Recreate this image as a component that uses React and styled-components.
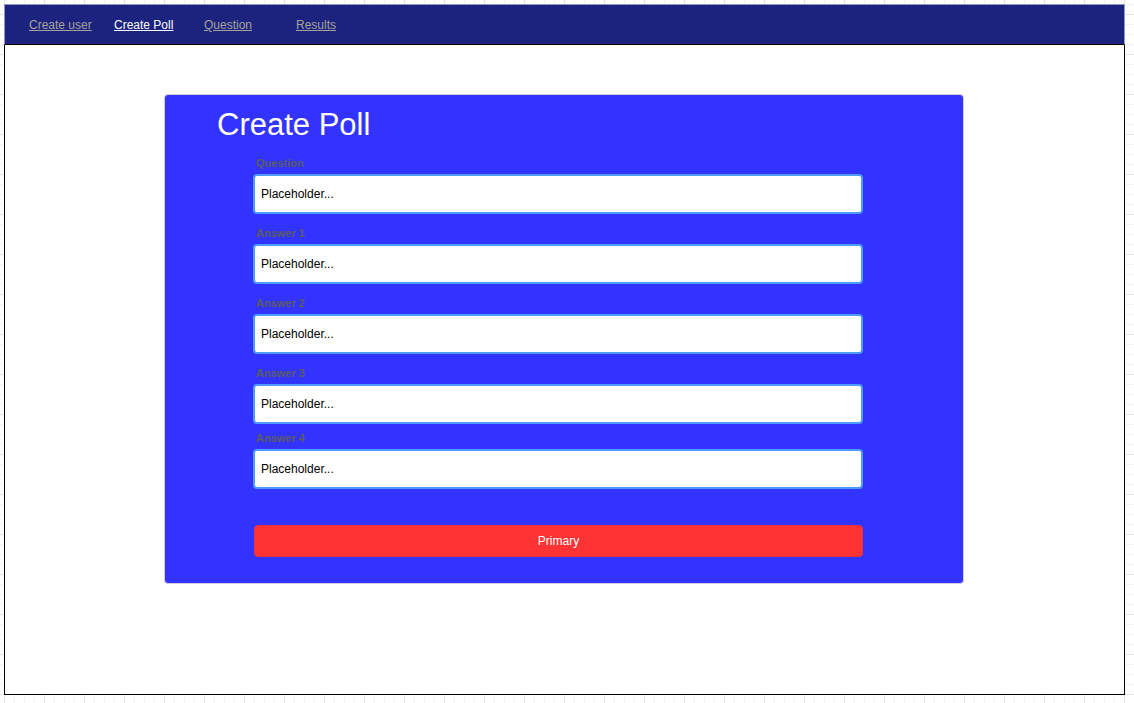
import React, { useState } from "react";
import styled, { createGlobalStyle } from "styled-components";

const GlobalStyle = createGlobalStyle`
  html, body {
    margin: 0;
    padding: 0;
    font-family: "Liberation Sans", Arial, sans-serif;
    background-color: #fff;
    background-image:
      linear-gradient(to right, #e4e4e4 1px, transparent 1px),
      linear-gradient(to bottom, #e4e4e4 1px, transparent 1px),
      linear-gradient(to right, #f3f3f3 1px, transparent 1px),
      linear-gradient(to bottom, #f3f3f3 1px, transparent 1px);
    background-size: 40px 40px, 40px 40px, 10px 10px, 10px 10px;
    background-position: 4px 14px;
    min-height: 703px;
  }
`;

const Page = styled.div`
  padding: 4px;
`;

const Frame = styled.div`
  width: 1121px;
  display: flex;
  flex-direction: column;
`;

const NavBar = styled.nav`
  height: 39px;
  background: #1b237e;
  border: 1px solid #9295c6;
  border-bottom: 1px solid #000;
  display: flex;
  align-items: center;
  padding-left: 24px;
`;

const NavLink = styled.a`
  width: ${(p) => (p.$width ? `${p.$width}px` : "auto")};
  font-size: 12px;
  color: ${(p) => (p.$active ? "#ffffff" : "#a8a39a")};
  text-decoration: underline;
  cursor: pointer;
  line-height: 14px;
  margin-top: 1px;
`;

const Main = styled.main`
  box-sizing: border-box;
  height: 650px;
  background: #fff;
  border: 1px solid #000;
  border-top: none;
  padding: 49px 0 0 159px;
`;

const Card = styled.section`
  width: 800px;
  box-sizing: border-box;
  background: #3333ff;
  border: 1px solid #cfcfd8;
  border-radius: 4px;
  padding: 11px 0 26px 52px;
`;

const Title = styled.h1`
  margin: 0 0 14px;
  font-size: 31px;
  line-height: 37px;
  font-weight: normal;
  color: #fff;
`;

const Form = styled.form`
  width: 610px;
  margin-left: 36px;
  display: flex;
  flex-direction: column;
`;

const Field = styled.div`
  display: flex;
  flex-direction: column;
  margin-bottom: ${(p) => p.$gap}px;
`;

const Label = styled.label`
  font-size: 11px;
  line-height: 13px;
  font-weight: bold;
  color: #5a5c5e;
  padding-left: 3px;
  margin-bottom: 4px;
`;

const Input = styled.input`
  box-sizing: border-box;
  height: 40px;
  width: 100%;
  border: 2px solid #4c9cff;
  border-radius: 4px;
  background: #fff;
  padding: 0 6px;
  font-family: "Liberation Sans", Arial, sans-serif;
  font-size: 12px;
  color: #000;
  outline: none;
`;

const Button = styled.button`
  box-sizing: border-box;
  height: 32px;
  margin-left: 1px;
  border: 1px solid #e83040;
  border-radius: 4px;
  background: #ff3333;
  color: #fff;
  font-family: "Liberation Sans", Arial, sans-serif;
  font-size: 12px;
  cursor: pointer;
`;

const links = [
  { label: "Create user", width: 85 },
  { label: "Create Poll", width: 90, active: true },
  { label: "Question", width: 92 },
  { label: "Results" },
];

const fields = [
  { label: "Question", gap: 13 },
  { label: "Answer 1", gap: 13 },
  { label: "Answer 2", gap: 13 },
  { label: "Answer 3", gap: 8 },
  { label: "Answer 4", gap: 36 },
];

export default function App() {
  const [values, setValues] = useState(fields.map(() => "Placeholder..."));

  const update = (i, v) => {
    const next = [...values];
    next[i] = v;
    setValues(next);
  };

  return (
    <Page>
      <GlobalStyle />
      <Frame>
        <NavBar>
          {links.map((l) => (
            <NavLink key={l.label} $width={l.width} $active={l.active}>
              {l.label}
            </NavLink>
          ))}
        </NavBar>
        <Main>
          <Card>
            <Title>Create Poll</Title>
            <Form onSubmit={(e) => e.preventDefault()}>
              {fields.map((f, i) => (
                <Field key={f.label} $gap={f.gap}>
                  <Label>{f.label}</Label>
                  <Input value={values[i]} onChange={(e) => update(i, e.target.value)} />
                </Field>
              ))}
              <Button type="submit">Primary</Button>
            </Form>
          </Card>
        </Main>
      </Frame>
    </Page>
  );
}
